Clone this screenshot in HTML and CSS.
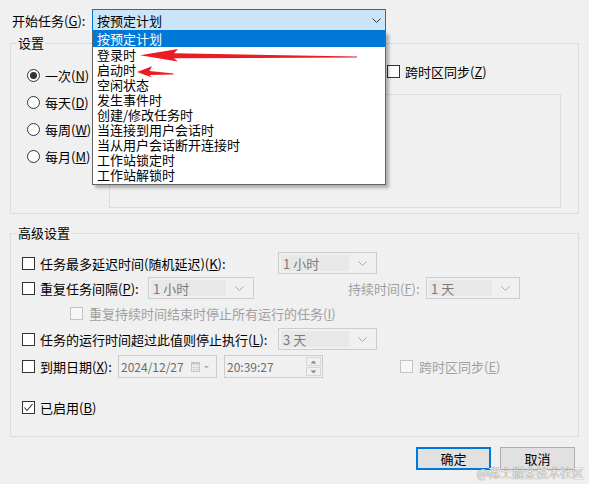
FILE: index.html
```html
<!DOCTYPE html>
<html lang="zh-CN">
<head>
<meta charset="utf-8">
<title>新建触发器</title>
<link rel="stylesheet" href="styles.css">
</head>
<body>
<div class="dialog">
  <div class="start-row">
    <span class="lbl-start">开始任务(<u>G</u>):</span>
    <div class="combo-main">
      <span>按预定计划</span>
      <svg class="chev" width="9" height="5" viewBox="0 0 9 5"><polyline points="0.5,0.5 4.5,4.5 8.5,0.5" fill="none" stroke="#333" stroke-width="1"/></svg>
    </div>
  </div>

  <div class="group settings">
    <span class="group-title">设置</span>
    <div class="settings-body">
      <div class="radios">
        <div class="radio-row"><span class="radio checked"></span><span>一次(<u>N</u>)</span></div>
        <div class="radio-row"><span class="radio"></span><span>每天(<u>D</u>)</span></div>
        <div class="radio-row"><span class="radio"></span><span>每周(<u>W</u>)</span></div>
        <div class="radio-row"><span class="radio"></span><span>每月(<u>M</u>)</span></div>
      </div>
      <div class="settings-right">
        <div class="tz-row"><span class="cb"></span><span class="txt">跨时区同步(<u>Z</u>)</span></div>
        <div class="recur-box"></div>
      </div>
    </div>
  </div>

  <div class="group advanced">
    <span class="group-title">高级设置</span>
    <div class="row r1">
      <span class="cb"></span><span class="txt w-long">任务最多延迟时间(随机延迟)(<u>K</u>):</span>
      <div class="combo w99"><span class="val">1 小时</span><svg class="chev" width="9" height="5" viewBox="0 0 9 5"><polyline points="0.5,0.5 4.5,4.5 8.5,0.5" fill="none" stroke="#a8a8a8" stroke-width="1"/></svg></div>
    </div>
    <div class="row r2">
      <span class="cb"></span><span class="txt w-rep">重复任务间隔(<u>P</u>):</span>
      <div class="combo w106"><span class="val">1 小时</span><svg class="chev" width="9" height="5" viewBox="0 0 9 5"><polyline points="0.5,0.5 4.5,4.5 8.5,0.5" fill="none" stroke="#a8a8a8" stroke-width="1"/></svg></div>
      <span class="dis-txt dur">持续时间(<u>F</u>):</span>
      <div class="combo w94"><span class="val">1 天</span><svg class="chev" width="9" height="5" viewBox="0 0 9 5"><polyline points="0.5,0.5 4.5,4.5 8.5,0.5" fill="none" stroke="#a8a8a8" stroke-width="1"/></svg></div>
    </div>
    <div class="row r3">
      <span class="cb dis"></span><span class="dis-txt sub">重复持续时间结束时停止所有运行的任务(<u>I</u>)</span>
    </div>
    <div class="row r4">
      <span class="cb"></span><span class="txt w-long">任务的运行时间超过此值则停止执行(<u>L</u>):</span>
      <div class="combo w99"><span class="val">3 天</span><svg class="chev" width="9" height="5" viewBox="0 0 9 5"><polyline points="0.5,0.5 4.5,4.5 8.5,0.5" fill="none" stroke="#a8a8a8" stroke-width="1"/></svg></div>
    </div>
    <div class="row r5">
      <span class="cb"></span><span class="txt w-exp">到期日期(<u>X</u>):</span>
      <div class="field date">
        <span class="fval">2024/12/27</span>
        <svg class="cal" width="19" height="10" viewBox="0 0 19 10">
          <rect x="0.5" y="0.5" width="8" height="9" fill="#f4f4f4" stroke="#c6c6c6"/>
          <rect x="0.5" y="0.5" width="8" height="2" fill="#c6c6c6"/>
          <path d="M3 3v6M6 3v6M1 5.5h7M1 7.5h7" stroke="#d4d4d4" stroke-width="1"/>
          <polygon points="13,4 18,4 15.5,6.5" fill="#b0b0b0"/>
        </svg>
      </div>
      <div class="field time">
        <span class="fval">20:39:27</span>
        <div class="spin">
          <span class="spin-btn"><svg width="7" height="4" viewBox="0 0 7 4"><polygon points="0.5,3.5 6.5,3.5 3.5,0.5" fill="#8a8a8a"/></svg></span>
          <span class="spin-btn"><svg width="7" height="4" viewBox="0 0 7 4"><polygon points="0.5,0.5 6.5,0.5 3.5,3.5" fill="#8a8a8a"/></svg></span>
        </div>
      </div>
      <span class="cb dis tz2"></span><span class="dis-txt tz2-txt">跨时区同步(<u>E</u>)</span>
    </div>
    <div class="row r6">
      <span class="cb"><svg width="11" height="11" viewBox="0 0 11 11"><polyline points="1.5,5.5 4,8.5 9.5,2" fill="none" stroke="#333" stroke-width="1.1"/></svg></span><span class="txt">已启用(<u>B</u>)</span>
    </div>
  </div>

  <div class="buttons">
    <div class="btn default">确定</div>
    <div class="btn">取消</div>
  </div>
</div>

<ul class="droplist">
  <li class="sel">按预定计划</li>
  <li>登录时</li>
  <li>启动时</li>
  <li>空闲状态</li>
  <li>发生事件时</li>
  <li>创建/修改任务时</li>
  <li>当连接到用户会话时</li>
  <li>当从用户会话断开连接时</li>
  <li>工作站锁定时</li>
  <li>工作站解锁时</li>
</ul>

<svg class="arrows" width="589" height="484" viewBox="0 0 589 484">
  <polygon points="140,55.3 178,49 174,53.3 357,56.4 357,57.6 174,58.3 178,61.5" fill="#ec1c24"/>
  <polygon points="137,72 152,66.3 149.5,71 173.5,73.4 173.5,74.4 149.5,75 152,77.5" fill="#ec1c24"/>
</svg>

<div class="watermark">@稀土掘金技术社区</div>
</body>
</html>
```

FILE: styles.css
```css
* { box-sizing: border-box; }

html, body { margin: 0; padding: 0; }

body {
  width: 589px;
  height: 484px;
  background: #f0f0f0;
  font-family: "Noto Sans CJK SC", "Microsoft YaHei", sans-serif;
  font-size: 13px;
  line-height: 17px;
  color: #000;
  position: relative;
  overflow: hidden;
}

u { text-decoration: underline; text-underline-offset: 1px; text-decoration-thickness: 1px; }

/* top row */
.start-row {
  display: flex;
  align-items: center;
  height: 22px;
  margin-top: 9px;
  padding-left: 12px;
}
.lbl-start { width: 80px; }
.combo-main {
  width: 294px;
  height: 22px;
  border: 1px solid #0078d7;
  background: #cce4f7;
  display: flex;
  align-items: center;
  justify-content: space-between;
  padding: 0 4px 0 4px;
}

/* group boxes */
.group {
  position: relative;
  border: 1px solid #dcdcdc;
  margin: 0 10px;
}
.group-title {
  position: absolute;
  top: -10px;
  left: 6px;
  padding: 0 1px;
  background: #f0f0f0;
}

.settings { margin-top: 12px; height: 171px; }
.settings-body { display: flex; }

.radios { width: 79px; padding: 18px 0 0 16px; flex: none; }
.radio-row {
  display: flex;
  align-items: center;
  gap: 5px;
  height: 27px;
  white-space: nowrap;
}
.radio {
  width: 13px;
  height: 13px;
  border: 1px solid #333;
  border-radius: 50%;
  background: #fff;
  display: flex;
  align-items: center;
  justify-content: center;
  flex: none;
}
.radio.checked::after {
  content: "";
  width: 7px;
  height: 7px;
  border-radius: 50%;
  background: #333;
}

.settings-right { padding-left: 19px; }
.tz-row {
  display: flex;
  align-items: center;
  height: 17px;
  margin: 19px 0 0 278px;
  white-space: nowrap;
}
.recur-box {
  margin-top: 14px;
  width: 452px;
  height: 114px;
  border: 1px solid #dcdcdc;
}

/* checkboxes */
.cb {
  width: 13px;
  height: 13px;
  border: 1px solid #333;
  background: #fff;
  flex: none;
  display: flex;
  align-items: center;
  justify-content: center;
}
.cb.dis { border-color: #c4c4c4; background: #f7f7f7; }
.txt { margin-left: 5px; white-space: nowrap; }

/* advanced */
.advanced { margin-top: 19px; height: 204px; padding: 18px 0 0 11px; }
.row { display: flex; align-items: center; height: 22px; white-space: nowrap; }
.r2 { margin-top: 3px; }
.r3 { margin-top: 3px; padding-left: 48px; }
.r4 { margin-top: 4px; }
.r5 { margin-top: 5px; height: 23px; }
.r6 { margin-top: 18px; }

.w-long { width: 238px; flex: none; }
.w-rep { width: 108px; flex: none; }
.w-exp { width: 78px; flex: none; }

.dis-txt { color: #a0a0a0; white-space: nowrap; }
.sub { margin-left: 6px; }
.dur { margin-left: 94px; width: 78px; flex: none; }

.combo {
  height: 22px;
  border: 1px solid #cccccc;
  background: #f0f0f0;
  display: flex;
  align-items: center;
  padding: 2px 9px 2px 2px;
  flex: none;
}
.combo .val {
  flex: 1;
  align-self: stretch;
  background: #e8e8e8;
  color: #7a7a7a;
  padding-left: 2px;
  margin-right: 9px;
  display: flex;
  align-items: center;
}
.w99 { width: 99px; }
.w106 { width: 106px; }
.w94 { width: 94px; }

.field {
  height: 23px;
  width: 99px;
  border: 1px solid #cccccc;
  background: #f0f0f0;
  display: flex;
  align-items: center;
  flex: none;
}
.fval { color: #6d6d6d; padding-left: 2px; font-size: 12px; }
.date { padding-right: 6px; }
.date .cal { margin-left: auto; }
.time { margin-left: 7px; padding-right: 1px; }
.spin {
  margin-left: auto;
  width: 15px;
  height: 19px;
  display: flex;
  flex-direction: column;
  gap: 1px;
}
.spin-btn {
  flex: 1;
  border: 1px solid #d6d6d6;
  background: #f0f0f0;
  display: flex;
  align-items: center;
  justify-content: center;
}

.tz2 { margin-left: 77px; }
.tz2-txt { margin-left: 6px; }

/* buttons */
.buttons {
  display: flex;
  justify-content: flex-end;
  gap: 9px;
  padding-right: 14px;
  margin-top: 10px;
}
.btn {
  width: 75px;
  height: 23px;
  border: 1px solid #adadad;
  background: #e1e1e1;
  display: flex;
  align-items: center;
  justify-content: center;
}
.btn.default { border: 2px solid #0078d7; }

/* dropdown list overlay */
.droplist {
  position: absolute;
  left: 92px;
  top: 31px;
  width: 294px;
  height: 154px;
  margin: 0;
  padding: 0 0 2px;
  list-style: none;
  background: #fff;
  border: 1px solid #646464;
  border-top: none;
  box-shadow: 3px 3px 3px rgba(0, 0, 0, 0.28);
}
.droplist li {
  height: 15px;
  line-height: 15px;
  padding-left: 4px;
  white-space: nowrap;
}
.droplist li.sel {
  background: #0078d7;
  color: #fff;
  height: 16px;
  line-height: 16px;
}

.arrows {
  position: absolute;
  left: 0;
  top: 0;
  pointer-events: none;
}

.watermark {
  position: absolute;
  right: 5px;
  top: 464px;
  font-size: 12px;
  line-height: 17px;
  color: rgba(255, 255, 255, 0.92);
  text-shadow: 0 0 1px rgba(0, 0, 0, 0.5), 0 0 1px rgba(0, 0, 0, 0.3);
  white-space: nowrap;
}
```
